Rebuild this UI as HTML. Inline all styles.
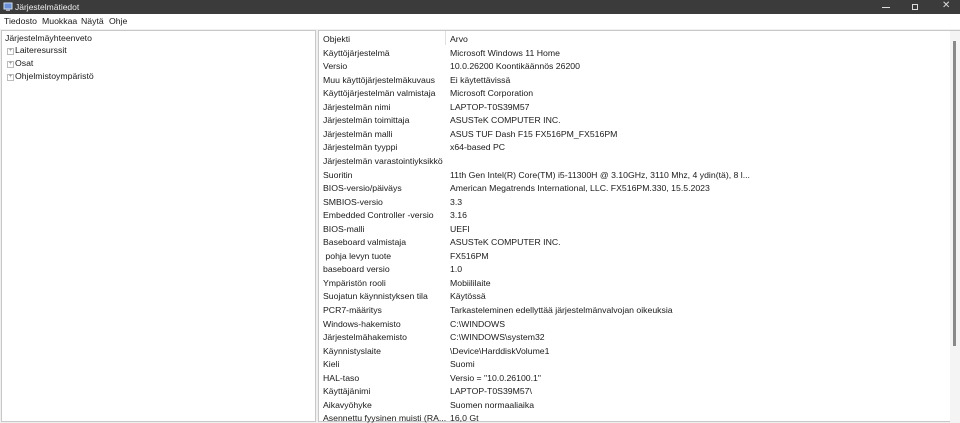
<!DOCTYPE html>
<html><head><meta charset="utf-8"><style>
*{margin:0;padding:0;box-sizing:border-box}
body{width:960px;height:422px;overflow:hidden;background:#f0f0f0;font-family:"Liberation Sans",sans-serif;font-size:8.7px;color:#1a1a1a;position:relative}
#title{position:absolute;left:0;top:0;width:960px;height:14px;background:#3b3b3b;color:#eee;font-size:8.5px}
#title span{position:absolute;left:15px;top:2px}
#menu{position:absolute;left:0;top:14px;width:960px;height:15px;background:#fff}
#menu span{position:absolute;top:2px}
#left{position:absolute;left:1px;top:30px;width:315px;height:392px;background:#fff;border:1px solid #c8c8c8}
#right{position:absolute;left:318px;top:30px;width:642px;height:392px;background:#fff;border:1px solid #c8c8c8}
.t{position:absolute;white-space:nowrap}
.pl{position:absolute;width:7px;height:7px;border:1px solid #bbb;font-size:6px;line-height:5px;text-align:center;color:#777}
.r{position:absolute;left:4px;white-space:nowrap}
.v{position:absolute;left:131px;white-space:nowrap}
</style></head><body>
<div id="title">
<svg style="position:absolute;left:3px;top:2px" width="10" height="10"><rect x="1" y="1" width="8" height="6" fill="#6b8fd6" stroke="#cde" stroke-width="1"/><rect x="3" y="7" width="4" height="2" fill="#aab"/></svg>
<span>Järjestelmätiedot</span>
<div style="position:absolute;left:882px;top:7px;width:8px;height:1px;background:#ddd"></div>
<div style="position:absolute;left:912px;top:4px;width:6px;height:6px;border:1px solid #ddd"></div>
<span style="left:942px;top:0px;font-size:10px;color:#ddd">✕</span>
</div>
<div id="menu"><span style="left:4px">Tiedosto</span><span style="left:42px">Muokkaa</span><span style="left:81px">Näytä</span><span style="left:109px">Ohje</span></div>
<div id="left">
<div class="t" style="left:3px;top:2px">Järjestelmäyhteenveto</div>
<div class="pl" style="left:5px;top:17px">+</div><div class="t" style="left:13px;top:14px">Laiteresurssit</div>
<div class="pl" style="left:5px;top:30px">+</div><div class="t" style="left:13px;top:27px">Osat</div>
<div class="pl" style="left:5px;top:43px">+</div><div class="t" style="left:13px;top:40px">Ohjelmistoympäristö</div>
</div>
<div id="right">
<div style="position:absolute;left:126px;top:0;width:1px;height:14px;background:#e0e0e0"></div>
<div style="position:absolute;left:631px;top:0;width:10px;height:392px;background:#f4f4f4"></div>
<div style="position:absolute;left:634px;top:10px;width:3px;height:305px;background:#8a8a8a"></div>
<div id="rows"></div>
</div>
<script>
var d=[["Objekti","Arvo"],["Käyttöjärjestelmä","Microsoft Windows 11 Home"],["Versio","10.0.26200 Koontikäännös 26200"],["Muu käyttöjärjestelmäkuvaus","Ei käytettävissä"],["Käyttöjärjestelmän valmistaja","Microsoft Corporation"],["Järjestelmän nimi","LAPTOP-T0S39M57"],["Järjestelmän toimittaja","ASUSTeK COMPUTER INC."],["Järjestelmän malli","ASUS TUF Dash F15 FX516PM_FX516PM"],["Järjestelmän tyyppi","x64-based PC"],["Järjestelmän varastointiyksikkö",""],["Suoritin","11th Gen Intel(R) Core(TM) i5-11300H @ 3.10GHz, 3110 Mhz, 4 ydin(tä), 8 l..."],["BIOS-versio/päiväys","American Megatrends International, LLC. FX516PM.330, 15.5.2023"],["SMBIOS-versio","3.3"],["Embedded Controller -versio","3.16"],["BIOS-malli","UEFI"],["Baseboard valmistaja","ASUSTeK COMPUTER INC."],[" pohja levyn tuote","FX516PM"],["baseboard versio","1.0"],["Ympäristön rooli","Mobiililaite"],["Suojatun käynnistyksen tila","Käytössä"],["PCR7-määritys","Tarkasteleminen edellyttää järjestelmänvalvojan oikeuksia"],["Windows-hakemisto","C:\\WINDOWS"],["Järjestelmähakemisto","C:\\WINDOWS\\system32"],["Käynnistyslaite","\\Device\\HarddiskVolume1"],["Kieli","Suomi"],["HAL-taso","Versio = \"10.0.26100.1\""],["Käyttäjänimi","LAPTOP-T0S39M57\\"],["Aikavyöhyke","Suomen normaaliaika"],["Asennettu fyysinen muisti (RA...","16,0 Gt"]];
var h="";d.forEach(function(r,i){var y=3+i*13.55;h+='<div class="r" style="top:'+y+'px">'+r[0].replace(/ /g,'&nbsp;')+'</div><div class="v" style="top:'+y+'px"></div>';});
var c=document.getElementById("rows");c.innerHTML=h;var vs=c.querySelectorAll(".v");d.forEach(function(r,i){vs[i].textContent=r[1];});
</script>
</body></html>
